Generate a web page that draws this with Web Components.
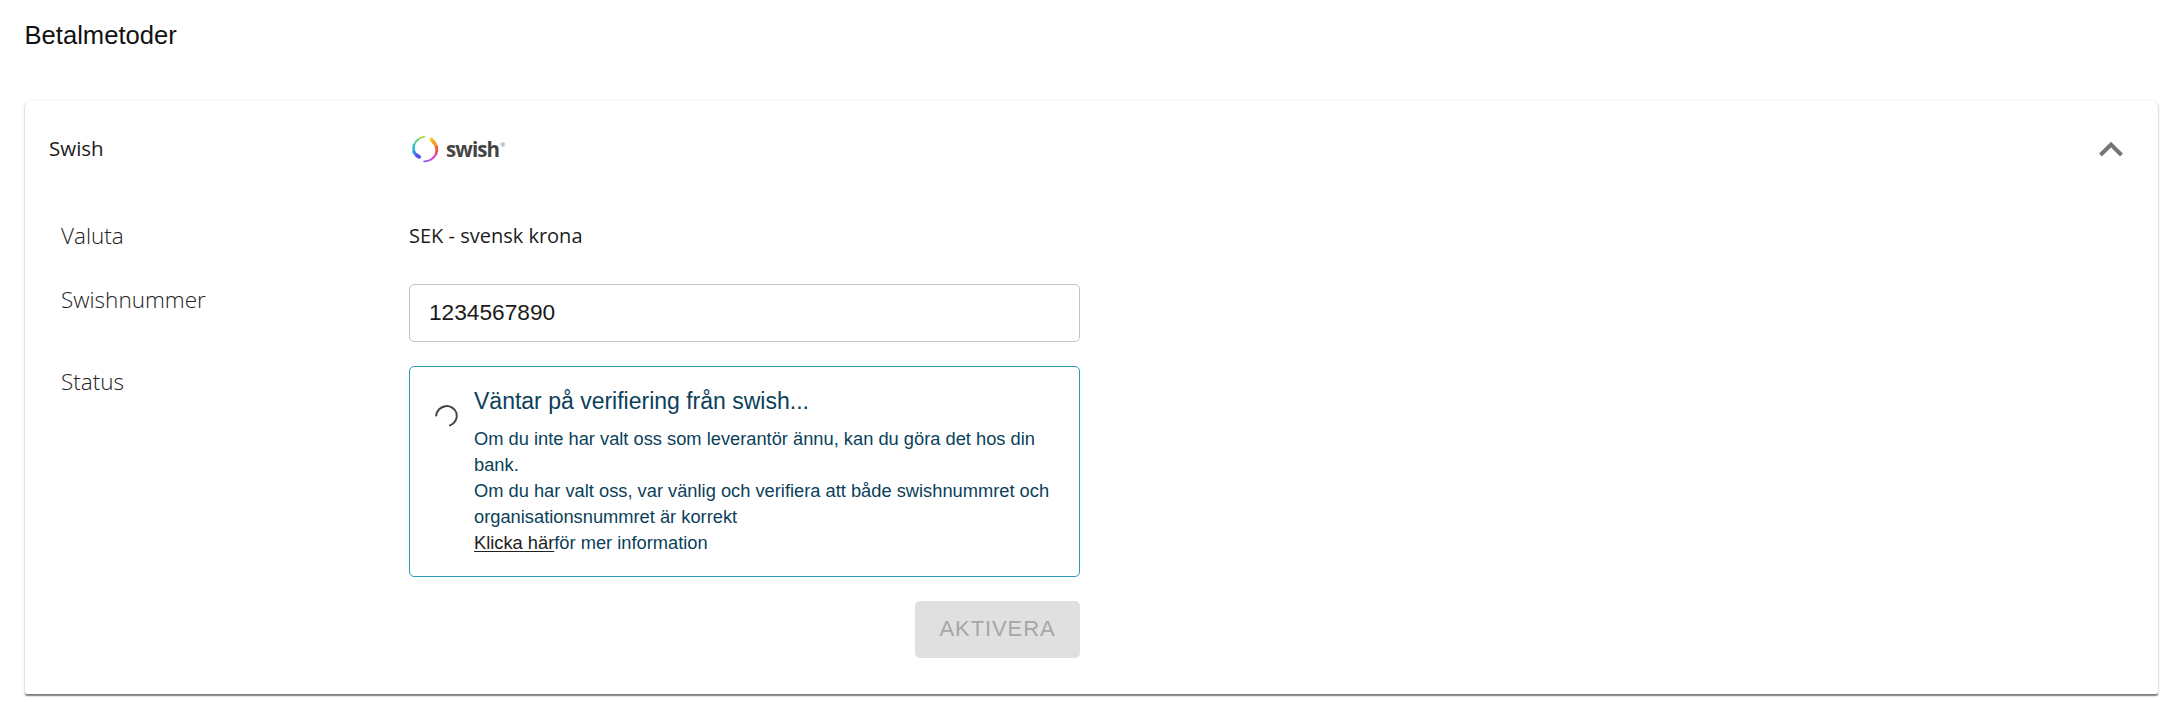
<!DOCTYPE html>
<html lang="sv">
<head>
<meta charset="utf-8">
<title>Betalmetoder</title>
<style>
    html, body { margin: 0; background: #fff; }
    body { font-family: "Liberation Sans", Arial, sans-serif; }
</style>
</head>
<body>
<payment-page>
    <payment-card>
        <swish-logo slot="logo"></swish-logo>
        <form-row label="Valuta" gap="34"><span class="plain">SEK - svensk krona</span></form-row>
        <form-row label="Swishnummer" gap="24" drop><text-field value="1234567890"></text-field></form-row>
        <form-row label="Status" gap="24" drop>
            <status-box heading="Väntar på verifiering från swish...">
                Om du inte har valt oss som leverantör ännu, kan du göra det hos din bank.<br>
                Om du har valt oss, var vänlig och verifiera att både swishnummret och organisationsnummret är korrekt<br>
                <a href="#">Klicka här</a>för mer information
            </status-box>
        </form-row>
        <form-row>
            <disabled-button>AKTIVERA</disabled-button>
        </form-row>
    </payment-card>
</payment-page>

<script>
// Small helper so each component only has to list its markup
function define (name, html, init) {
    customElements.define(name, class extends HTMLElement {
        constructor () {
            super()
            this.attachShadow({ mode: 'open' }).innerHTML = html
        }
        connectedCallback () {
            if (init) init(this, this.shadowRoot)
        }
    })
}

define('payment-page', `
<style>
    :host { display: block; padding: 20px 26px 8px 25px; color: #111; }
    h1 { margin: 0 0 51px -0.5px; font: 400 25.6px/30px "Liberation Sans", Arial, sans-serif; }
</style>
<h1>Betalmetoder</h1>
<slot></slot>
`)

define('payment-card', `
<style>
    :host {
        display: block;
        height: 593px;
        box-sizing: border-box;
        background: #fff;
        border-radius: 6px 6px 2px 2px;
        box-shadow: 0 1.5px 1.5px rgba(0,0,0,.5), 0 0 3px rgba(0,0,0,.07);
        padding: 0 24px;
    }
    header { display: flex; align-items: center; height: 96px; }
    .title { width: 360px; margin-top: -2px; font: 400 20.5px/27px "Open Sans", sans-serif; color: #1c1c1c; }
    .grow { flex: 1; }
    svg { display: block; margin-right: 9px; }
    main { display: flex; flex-direction: column; padding-top: 25px; }
</style>
<header>
    <span class="title">Swish</span>
    <slot name="logo"></slot>
    <span class="grow"></span>
    <svg width="28" height="18" viewBox="0 0 28 18"><path d="M3.5 15 14 4.5 24.5 15" fill="none" stroke="#757575" stroke-width="4"/></svg>
</header>
<main><slot></slot></main>
`)

define('swish-logo', `
<style>
    :host { display: flex; align-items: center; margin-left: 2px; }
    svg { display: block; }
    span { font: 700 20.5px/28px "Open Sans", sans-serif; color: #444; margin-left: 5px; letter-spacing: -0.9px; margin-top: -1px; }
    sup { font: 400 6px/6px "Open Sans", sans-serif; vertical-align: 10px; margin-left: 1px; color: #777; letter-spacing: 0; }
</style>
<svg width="30" height="30" viewBox="0 0 30 30" fill="none" stroke-linecap="round">
    <!-- left arc, thin at the top and heavy at the lower end -->
    <path d="M13.5 2.6A12.5 12.5 0 0 0 7 5.5" stroke="#a5dc4e" stroke-width="1.6"/>
    <path d="M7 5.5A12.5 12.5 0 0 0 3 11" stroke="#4fd08a" stroke-width="2"/>
    <path d="M3 11A12.5 12.5 0 0 0 3 18" stroke="#35bfd0" stroke-width="2.6"/>
    <path d="M3 18A11 11 0 0 0 6 21.5" stroke="#3c8dea" stroke-width="3.2"/>
    <path d="M6 21.5 8.2 22.8" stroke="#5a55e6" stroke-width="3.8"/>
    <!-- right arc, heavy at the top and thin at the lower end -->
    <path d="M20.5 5.5 22.5 8" stroke="#f4c52f" stroke-width="3.8"/>
    <path d="M22.5 8A11 11 0 0 1 25.5 13" stroke="#f79a2a" stroke-width="3.2"/>
    <path d="M25.5 13A11.5 11.5 0 0 1 25 20" stroke="#f0503f" stroke-width="2.6"/>
    <path d="M25 20A12 12 0 0 1 20 25.5" stroke="#dd44b8" stroke-width="2"/>
    <path d="M20 25.5A12.5 12.5 0 0 1 13 27.4" stroke="#9a5aea" stroke-width="1.6"/>
</svg>
<span>swish<sup>®</sup></span>
`)

define('form-row', `
<style>
    :host { display: grid; grid-template-columns: 360px 671px; }
    :host([drop]) .label { padding-top: 2px; }
    .label { padding-left: 12px; font: 300 22.5px/28px "Open Sans", sans-serif; color: #222; }
    .value { font: 400 20px/28px "Open Sans", sans-serif; color: #1c1c1c; min-height: 28px; }
</style>
<div class="label"></div>
<div class="value"><slot></slot></div>
`, (el, root) => {
    root.querySelector('.label').textContent = el.getAttribute('label') || ''
    el.style.marginBottom = (el.getAttribute('gap') || 0) + 'px'
})

define('text-field', `
<style>
    :host { display: block; }
    div {
        height: 58px; box-sizing: border-box; padding: 0 19px 2px;
        border: 1px solid #c4c4c4; border-radius: 5px;
        display: flex; align-items: center;
        font: 400 22.7px/26px "Liberation Sans", Arial, sans-serif; color: #1a1a1a;
    }
</style>
<div></div>
`, (el, root) => {
    root.querySelector('div').textContent = el.getAttribute('value')
})

define('status-box', `
<style>
    :host {
        display: flex; box-sizing: border-box; height: 211px;
        border: 1px solid #2e9ab8; border-radius: 5px;
        padding: 19px 20px 0 24px; color: #0b3f5a;
    }
    svg { flex: none; display: block; margin: 17px 15px 0 0; }
    h2 { margin: 0 0 10px; font: 400 23px/30px "Liberation Sans", Arial, sans-serif; }
    .text { font: 400 18.3px/26px "Liberation Sans", Arial, sans-serif; }
    ::slotted(a) { color: #222; text-decoration: underline; text-underline-offset: 2px; text-decoration-thickness: 1px; }
</style>
<svg width="25" height="25" viewBox="0 0 25 25"><path d="M2.2 12.5A10.5 10.5 0 0 1 22.5 10 10.5 10.5 0 0 1 16 22.4" fill="none" stroke="#444" stroke-width="2" stroke-linecap="round"/></svg>
<div>
    <h2></h2>
    <div class="text"><slot></slot></div>
</div>
`, (el, root) => {
    root.querySelector('h2').textContent = el.getAttribute('heading')
})

define('disabled-button', `
<style>
    :host { display: flex; justify-content: flex-end; }
    div {
        width: 165px; height: 57px; box-sizing: border-box; padding-bottom: 2px;
        display: flex; align-items: center; justify-content: center;
        background: #e0e0e0; border-radius: 5px; color: #a6a6a6;
        font: 400 22px/26px "Liberation Sans", Arial, sans-serif; letter-spacing: .9px;
    }
</style>
<div><slot></slot></div>
`)
</script>
</body>
</html>
